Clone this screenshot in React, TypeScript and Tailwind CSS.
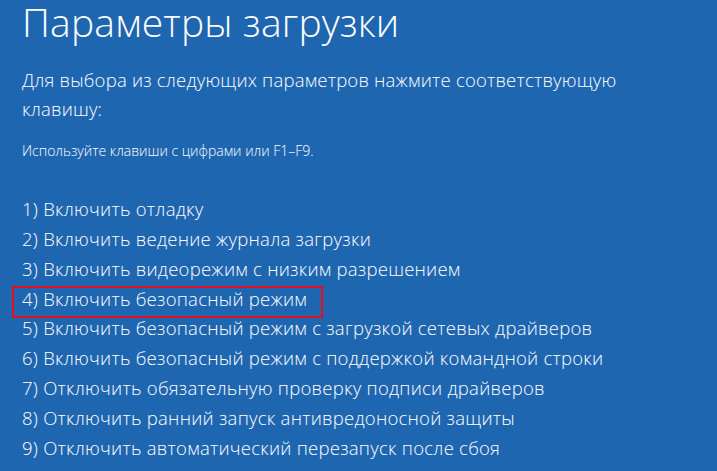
import React from "react";

const options: string[] = [
    "1) Включить отладку",
    "2) Включить ведение журнала загрузки",
    "3) Включить видеорежим с низким разрешением",
    "4) Включить безопасный режим",
    "5) Включить безопасный режим с загрузкой сетевых драйверов",
    "6) Включить безопасный режим с поддержкой командной строки",
    "7) Отключить обязательную проверку подписи драйверов",
    "8) Отключить ранний запуск антивредоносной защиты",
    "9) Отключить автоматический перезапуск после сбоя",
];

const App: React.FC = () => {
    return (
        <div
            className="w-[717px] h-[471px] overflow-hidden bg-[#1f66b1] text-white pl-[22px] pt-[1px]"
            style={{ fontFamily: '"Open Sans", "Noto Sans", sans-serif' }}
        >
            <h1 className="-mt-[5px] text-[39px] leading-[52px] font-light tracking-[0.2px]">Параметры загрузки</h1>

            <p className="mt-[17px] text-[18.5px] leading-[29px] font-light tracking-[0.2px] w-[640px]">
                Для выбора из следующих параметров нажмите соответствующую клавишу:
            </p>

            <p className="mt-[19px] text-[14px] leading-[18px] font-light">
                Используйте клавиши с цифрами или F1–F9.
            </p>

            {/* list of boot options */}
            <ul className="mt-[34px]">
                {options.map((opt, i) => (
                    <li key={i} className="relative h-[29.85px] text-[18.5px] leading-[29.85px] font-light tracking-[0.25px]">
                        {i === 3 && (
                            <div className="absolute left-[-10px] top-[2px] w-[311px] h-[32px] border-2 border-[#e3101b]" />
                        )}
                        {opt}
                    </li>
                ))}
            </ul>
        </div>
    );
};

export default App;
